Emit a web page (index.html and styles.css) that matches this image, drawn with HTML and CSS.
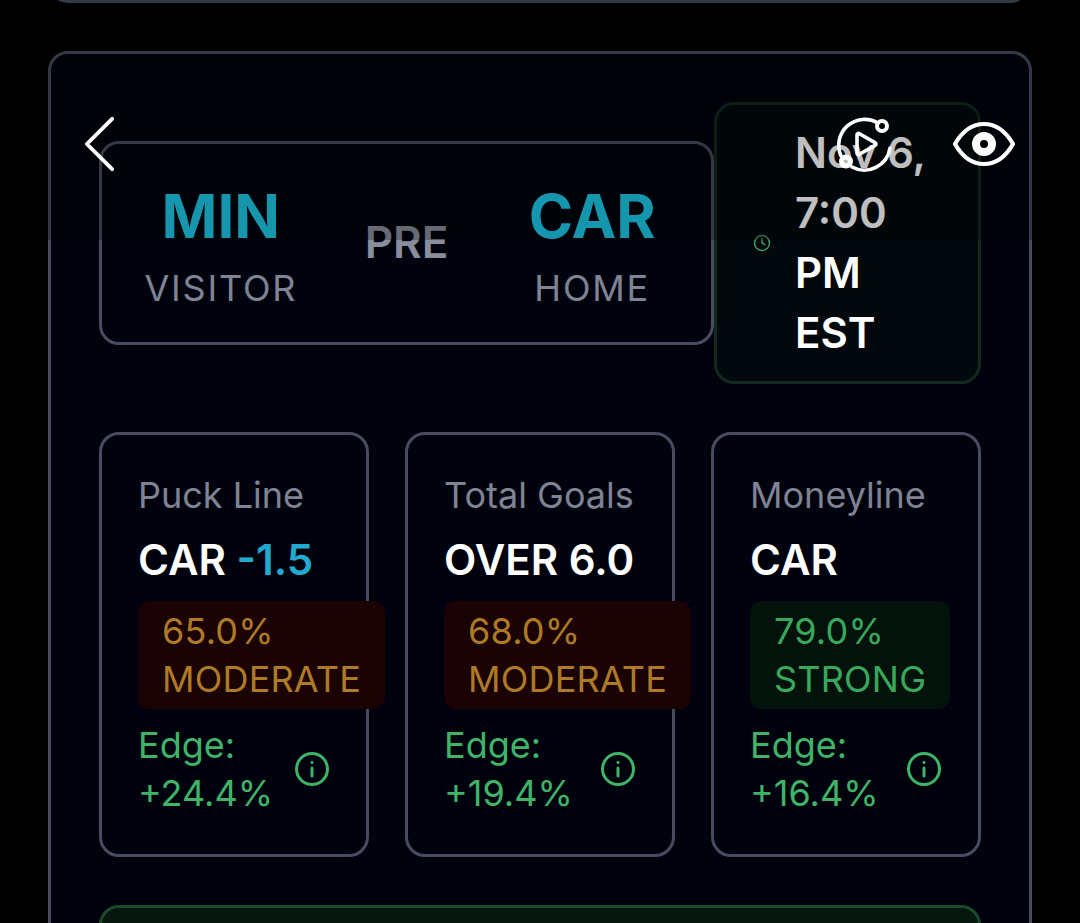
FILE: index.html
```html
<!DOCTYPE html>
<html lang="en">
<head>
    <meta charset="UTF-8">
    <meta name="viewport" content="width=device-width, initial-scale=1.0">
    <title>Game Detail</title>
    <link rel="stylesheet" href="styles.css">
</head>
<body>
    <div class="prev-card"></div>

    <div class="game-card">
        <div class="game-header">
            <div class="match-box">
                <div class="team">
                    <div class="team-code">MIN</div>
                    <div class="team-label">VISITOR</div>
                </div>
                <div class="game-status">PRE</div>
                <div class="team">
                    <div class="team-code">CAR</div>
                    <div class="team-label">HOME</div>
                </div>
            </div>
            <div class="time-box">
                <svg class="clock-icon" viewBox="0 0 18 18" fill="none" stroke="currentColor" stroke-width="1.5" stroke-linecap="round" stroke-linejoin="round">
                    <circle cx="9" cy="9" r="7.5"/>
                    <path d="M9 4.8V9l2.8 1.6"/>
                </svg>
                <div class="time-text">Nov 6, 7:00 PM EST</div>
            </div>
        </div>

        <div class="pick-grid">
            <div class="pick-card">
                <div class="pick-title">Puck Line</div>
                <div class="pick-value">CAR <span class="pick-line">-1.5</span></div>
                <div class="confidence moderate">65.0%<br>MODERATE</div>
                <div class="edge-row">
                    <div class="edge-text">Edge: +24.4%</div>
                    <svg class="info-icon" viewBox="0 0 36 36" fill="none" stroke="currentColor" stroke-width="3" stroke-linecap="round">
                        <circle cx="18" cy="18" r="15.5"/>
                        <path d="M18 17v8"/>
                        <path d="M18 11.2v.4"/>
                    </svg>
                </div>
            </div>
            <div class="pick-card">
                <div class="pick-title">Total Goals</div>
                <div class="pick-value">OVER 6.0</div>
                <div class="confidence moderate">68.0%<br>MODERATE</div>
                <div class="edge-row">
                    <div class="edge-text">Edge: +19.4%</div>
                    <svg class="info-icon" viewBox="0 0 36 36" fill="none" stroke="currentColor" stroke-width="3" stroke-linecap="round">
                        <circle cx="18" cy="18" r="15.5"/>
                        <path d="M18 17v8"/>
                        <path d="M18 11.2v.4"/>
                    </svg>
                </div>
            </div>
            <div class="pick-card">
                <div class="pick-title">Moneyline</div>
                <div class="pick-value">CAR</div>
                <div class="confidence strong">79.0%<br>STRONG</div>
                <div class="edge-row">
                    <div class="edge-text">Edge: +16.4%</div>
                    <svg class="info-icon" viewBox="0 0 36 36" fill="none" stroke="currentColor" stroke-width="3" stroke-linecap="round">
                        <circle cx="18" cy="18" r="15.5"/>
                        <path d="M18 17v8"/>
                        <path d="M18 11.2v.4"/>
                    </svg>
                </div>
            </div>
        </div>

        <div class="summary-box"></div>
    </div>

    <!-- video player bar sits over the page -->
    <div class="player-bar">
        <svg class="back-icon" viewBox="0 0 32 56" fill="none" stroke="currentColor" stroke-width="4" stroke-linecap="round" stroke-linejoin="round">
            <path d="M29 2 3 28l26 26"/>
        </svg>
        <svg class="play-icon" viewBox="0 0 64 64" fill="none" stroke="currentColor" stroke-width="3.6" stroke-linecap="round" stroke-linejoin="round">
            <path d="M9 44A26 26 0 0 1 46 11"/>
            <path d="M58 36A26 26 0 0 1 20 55"/>
            <circle cx="50" cy="14" r="5" stroke-width="4"/>
            <circle cx="14" cy="49.500" r="4.500" stroke-width="5"/>
            <path d="M27 21.500 43 30.600a1.500 1.500 0 0 1 0 2.800L27 42.500a1.500 1.500 0 0 1-2-1.400V23a1.500 1.500 0 0 1 2-1.500z"/>
        </svg>
        <svg class="eye-icon" viewBox="0 0 64 46" fill="none">
            <path d="M3 23C11 9 21 3 32 3s21 6 29 20c-8 14-18 20-29 20S11 37 3 23z" stroke="currentColor" stroke-width="4.200" stroke-linejoin="round"/>
            <circle cx="32" cy="23" r="8" stroke="currentColor" stroke-width="8"/>
        </svg>
    </div>
</body>
</html>
```

FILE: styles.css
```css
* {
    box-sizing: border-box;
}
html, body {
    height: 923px;
    overflow: hidden;
}
body {
    margin: 0;
    position: relative;
    background-color: #000;
    font-family: Inter, "Liberation Sans", sans-serif;
    color: #fff;
}
.prev-card {
    height: 51px;
    margin: -48px 50px 48px 48px;
    border: 3px solid #474c5e;
    border-radius: 20px;
    background-color: #00030e;
}
.game-card {
    margin: 0 48px;
    padding: 48px;
    border: 3px solid #474c5e;
    border-radius: 20px;
    background-color: #00030e;
    display: flex;
    flex-direction: column;
    gap: 48px;
}
.game-header {
    display: flex;
    align-items: center;
}
.match-box {
    flex: 1;
    display: grid;
    grid-template-columns: repeat(3, 1fr);
    gap: 24px;
    align-items: center;
    padding: 36px 38px 30px;
    border: 3px solid #474c5e;
    border-radius: 20px;
}
.team {
    display: flex;
    flex-direction: column;
    align-items: center;
}
.team-code {
    font-size: 60px;
    line-height: 72px;
    font-weight: 700;
    color: #1cc8e7;
}
.team-label {
    margin-top: 12px;
    font-size: 36px;
    line-height: 48px;
    letter-spacing: 1.8px;
    color: #7f8393;
}
.game-status {
    margin-bottom: 8px;
    text-align: center;
    font-size: 44px;
    line-height: 60px;
    font-weight: 600;
    color: #8a8d9b;
}
.time-box {
    width: 267px;
    display: flex;
    align-items: center;
    gap: 24px;
    padding: 18px 36px;
    border: 3px solid #12291e;
    border-radius: 20px;
    background-color: #02080c;
}
.clock-icon {
    width: 18px;
    height: 18px;
    flex-shrink: 0;
    color: #3c9c66;
}
.time-text {
    font-size: 42px;
    line-height: 60px;
    font-weight: 600;
}
.pick-grid {
    display: grid;
    grid-template-columns: repeat(3, 1fr);
    gap: 36px;
}
.pick-card {
    min-width: 0;
    padding: 36px 36px 37px;
    border: 3px solid #474c5e;
    border-radius: 20px;
}
.pick-title {
    font-size: 36px;
    line-height: 48px;
    color: #7f8393;
}
.pick-value {
    margin-top: 11px;
    font-size: 42px;
    line-height: 60px;
    font-weight: 600;
}
.pick-line {
    color: #22a9cf;
}
.confidence {
    width: max-content;
    margin-top: 11px;
    padding: 6px 24px;
    border-radius: 12px;
    font-size: 36px;
    line-height: 48px;
    letter-spacing: 0.2px;
}
.moderate {
    background-color: #1a0205;
    color: #ad7a25;
}
.strong {
    background-color: #03130b;
    color: #38a85c;
}
.edge-row {
    margin-top: 12px;
    display: flex;
    align-items: center;
    justify-content: space-between;
    gap: 12px;
    color: #3fb468;
}
.edge-text {
    font-size: 36px;
    line-height: 48px;
}
.info-icon {
    width: 36px;
    height: 36px;
    flex-shrink: 0;
}
.summary-box {
    height: 160px;
    border: 3px solid #1a4a2a;
    border-radius: 20px;
    background-color: #07160f;
}
.player-bar {
    position: absolute;
    top: 0;
    left: 0;
    right: 0;
    height: 240px;
    background-color: rgba(0, 0, 0, 0.25);
    color: #fff;
}
.player-bar svg {
    position: absolute;
}
.back-icon {
    left: 84px;
    top: 116px;
    width: 31px;
    height: 56px;
}
.play-icon {
    left: 832px;
    top: 112px;
    width: 64px;
    height: 64px;
}
.eye-icon {
    left: 952px;
    top: 121px;
    width: 64px;
    height: 46px;
}
```
